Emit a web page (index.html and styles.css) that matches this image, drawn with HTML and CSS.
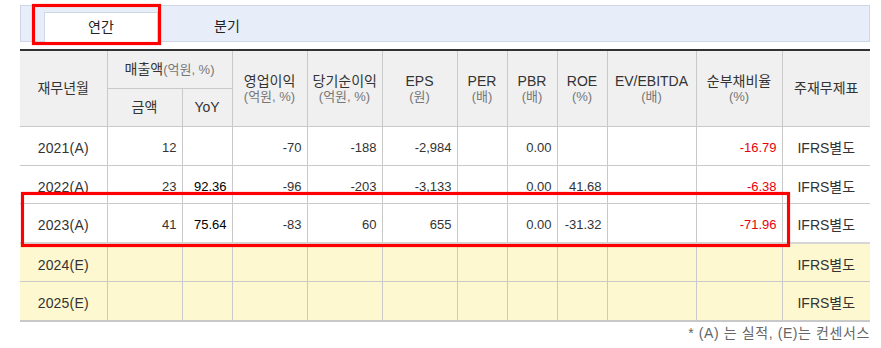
FILE: index.html
```html
<!DOCTYPE html>
<html lang="ko">
<head>
<meta charset="utf-8">
<title>재무 요약</title>
<link rel="stylesheet" href="styles.css">
</head>
<body>
<div class="wrap">
  <div class="tabs">
    <a class="tab on">연간</a>
    <a class="tab">분기</a>
  </div>
  <table class="fin">
    <colgroup>
      <col class="c87"><col class="c75"><col class="c50"><col class="c75"><col class="c75"><col class="c75"><col class="c50"><col class="c50"><col class="c50"><col class="c89"><col class="c86"><col class="c88">
    </colgroup>
    <thead>
      <tr>
        <th rowspan="2" class="first">재무년월</th>
        <th colspan="2">매출액<span class="unit">(억원, %)</span></th>
        <th rowspan="2">영업이익<br><span class="unit">(억원, %)</span></th>
        <th rowspan="2">당기순이익<br><span class="unit">(억원, %)</span></th>
        <th rowspan="2">EPS<br><span class="unit">(원)</span></th>
        <th rowspan="2">PER<br><span class="unit">(배)</span></th>
        <th rowspan="2">PBR<br><span class="unit">(배)</span></th>
        <th rowspan="2">ROE<br><span class="unit">(%)</span></th>
        <th rowspan="2">EV/EBITDA<br><span class="unit">(배)</span></th>
        <th rowspan="2">순부채비율<br><span class="unit">(%)</span></th>
        <th rowspan="2" class="last">주재무제표</th>
      </tr>
      <tr>
        <th>금액</th>
        <th>YoY</th>
      </tr>
    </thead>
    <tbody>
      <tr>
        <td class="yr first">2021(A)</td>
        <td class="num">12</td>
        <td class="num yoy"></td>
        <td class="num">-70</td>
        <td class="num">-188</td>
        <td class="num">-2,984</td>
        <td class="num"></td>
        <td class="num">0.00</td>
        <td class="num"></td>
        <td class="num"></td>
        <td class="num neg">-16.79</td>
        <td class="std last">IFRS별도</td>
      </tr>
      <tr>
        <td class="yr first">2022(A)</td>
        <td class="num">23</td>
        <td class="num yoy">92.36</td>
        <td class="num">-96</td>
        <td class="num">-203</td>
        <td class="num">-3,133</td>
        <td class="num"></td>
        <td class="num">0.00</td>
        <td class="num">41.68</td>
        <td class="num"></td>
        <td class="num neg">-6.38</td>
        <td class="std last">IFRS별도</td>
      </tr>
      <tr class="lastact">
        <td class="yr first">2023(A)</td>
        <td class="num">41</td>
        <td class="num yoy">75.64</td>
        <td class="num">-83</td>
        <td class="num">60</td>
        <td class="num">655</td>
        <td class="num"></td>
        <td class="num">0.00</td>
        <td class="num">-31.32</td>
        <td class="num"></td>
        <td class="num neg">-71.96</td>
        <td class="std last">IFRS별도</td>
      </tr>
      <tr class="est">
        <td class="yr first">2024(E)</td>
        <td></td><td></td><td></td><td></td><td></td><td></td><td></td><td></td><td></td><td></td>
        <td class="std last">IFRS별도</td>
      </tr>
      <tr class="est">
        <td class="yr first">2025(E)</td>
        <td></td><td></td><td></td><td></td><td></td><td></td><td></td><td></td><td></td><td></td>
        <td class="std last">IFRS별도</td>
      </tr>
    </tbody>
  </table>
  <p class="note">* (A) 는 실적, (E)는 컨센서스</p>
  <div class="mark mark-tab"></div>
  <div class="mark mark-row"></div>
</div>
</body>
</html>
```

FILE: styles.css
```css
html, body {
  margin: 0;
  padding: 0;
  background: #fff;
}

body {
  font-family: "Liberation Sans", "Noto Sans CJK KR", sans-serif;
  color: #333;
}

.wrap {
  position: relative;
  width: 850px;
  margin: 5px 0 0 20px;
}

/* tabs */
.tabs {
  display: flex;
  box-sizing: border-box;
  height: 37px;
  padding-left: 23px;
  background: #e8eef9;
  border: 1px solid #cfd7e6;
}

.tab {
  display: block;
  box-sizing: border-box;
  width: 114px;
  height: 30px;
  margin-top: 6px;
  font-size: 14px;
  line-height: 29px;
  text-align: center;
  color: #222;
}

.tab + .tab {
  margin-left: 12px;
}

.tab.on {
  background: #fff;
  border: 1px solid #cfd7e6;
  border-bottom: none;
  position: relative;
}

/* table */
.fin {
  width: 850px;
  margin-top: 7px;
  border-collapse: collapse;
  table-layout: fixed;
  border-top: 2px solid #333;
  border-bottom: 2px solid #c8c8c8;
}

.c87 { width: 87px; }
.c75 { width: 75px; }
.c50 { width: 50px; }
.c89 { width: 89px; }
.c86 { width: 86px; }
.c88 { width: 88px; }

.fin th,
.fin td {
  border: 1px solid #c9c9c9;
  padding: 0 5px;
  white-space: nowrap;
  overflow: hidden;
}

.fin th {
  height: 37px;
  background: #f0f0f0;
  font-weight: normal;
  font-size: 14px;
  line-height: 15px;
  color: #333;
  text-align: center;
}

.fin th .unit {
  color: #777;
  font-size: 13px;
}

.fin .first { border-left: none; }
.fin .last { border-right: none; }

.fin td {
  height: 32.5px;
  font-size: 13px;
  line-height: 16px;
  color: #333;
  padding-top: 5px;
  padding-bottom: 0;
}

.fin td.yr {
  font-size: 14px;
  text-align: center;
  letter-spacing: 0.2px;
  color: #333;
}

.fin td.num {
  text-align: right;
}

.fin td.yoy {
  color: #000;
}

.fin td.neg {
  color: #e8000b;
}

.fin td.std {
  text-align: center;
  font-size: 14px;
  color: #333;
}

.fin tr.lastact td {
  border-bottom: 2px solid #d6d6d6;
}

.fin tr.est td {
  background: #fdf8cf;
}

.note {
  margin: 2px 0 0;
  font-size: 14px;
  line-height: 18px;
  letter-spacing: 0.6px;
  text-align: right;
  color: #666;
}

/* red annotation boxes over the content */
.mark {
  position: absolute;
  box-sizing: border-box;
  border: 3px solid #ff0000;
  box-shadow: 0 0 1px rgba(255, 0, 0, 0.6), inset 0 0 1px rgba(255, 0, 0, 0.6);
  pointer-events: none;
}

.mark-tab {
  left: 12px;
  top: -1px;
  width: 129px;
  height: 41px;
}

.mark-row {
  left: 1px;
  top: 187px;
  width: 769px;
  height: 55px;
}
```
